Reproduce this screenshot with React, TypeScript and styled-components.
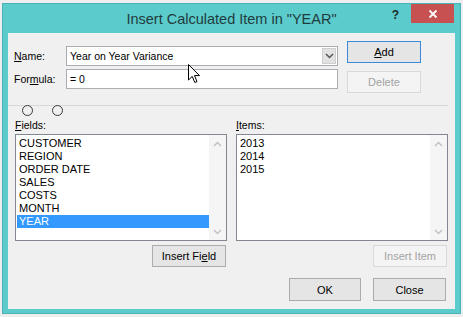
import { createGlobalStyle } from 'styled-components';
import styled from 'styled-components';

const GlobalStyle = createGlobalStyle`
  html, body {
    margin: 0;
    padding: 0;
    background: #eeeeee;
  }
  * {
    box-sizing: border-box;
  }
`;

const Window = styled.div`
  width: 459px;
  height: 311px;
  margin: 3px 2px;
  background: #5ccbcc;
  border: 1px solid #4bb3b5;
  padding: 0 5px 4px 5px;
  display: flex;
  flex-direction: column;
  font-family: 'Liberation Sans', Arial, sans-serif;
  font-size: 10.5px;
  color: #000;
`;

const TitleBar = styled.div`
  height: 29px;
  display: grid;
  grid-template-columns: 1fr auto 1fr;
  align-items: center;
`;

const Title = styled.span`
  grid-column: 2;
  font-size: 14.5px;
  color: #1f3c3d;
  white-space: nowrap;
`;

const Controls = styled.div`
  grid-column: 3;
  align-self: start;
  display: flex;
  justify-content: flex-end;
  align-items: flex-start;
  gap: 12px;
  margin-right: 1px;
`;

const Help = styled.span`
  font-size: 12px;
  font-weight: bold;
  color: #1a2a2a;
  margin-top: 4px;
`;

const CloseBox = styled.div`
  width: 43px;
  height: 19px;
  background: #c75050;
  display: flex;
  align-items: center;
  justify-content: center;
`;

const Client = styled.div`
  flex: 1;
  background: #f0f0f0;
  position: relative;
  display: flex;
  flex-direction: column;
`;

const Top = styled.div`
  display: flex;
  align-items: flex-start;
  padding-left: 6px;
`;

const FormGrid = styled.div`
  display: grid;
  grid-template-columns: 52px 272px;
  grid-auto-rows: 20px;
  row-gap: 3px;
  padding-top: 13px;
  align-items: center;
`;

const Mn = styled.span`
  text-decoration: underline;
  text-underline-offset: 1px;
`;

const Field = styled.div`
  height: 20px;
  border: 1px solid #abadb3;
  background: #fff;
  display: flex;
  align-items: center;
  padding-left: 3px;
`;

const FieldText = styled.span`
  flex: 1;
`;

const DropButton = styled.div`
  width: 14px;
  align-self: stretch;
  margin: 1px;
  background: #e2e2e2;
  border: 1px solid #cfcfcf;
  display: flex;
  align-items: center;
  justify-content: center;
`;

const ButtonCol = styled.div`
  display: flex;
  flex-direction: column;
  gap: 8px;
  margin-left: 9px;
  padding-top: 8px;
`;

const Button = styled.div<{ $w?: number; $h?: number; $disabled?: boolean; $focus?: boolean }>`
  width: ${(p) => p.$w ?? 74}px;
  height: ${(p) => p.$h ?? 22}px;
  display: flex;
  align-items: center;
  justify-content: center;
  background: ${(p) => (p.$disabled ? '#f4f4f4' : '#e5e5e5')};
  border: 1px solid ${(p) => (p.$focus ? '#3d88d4' : p.$disabled ? '#d9d9d9' : '#acacac')};
  color: ${(p) => (p.$disabled ? '#a3a3a3' : '#000')};
  font-size: 11px;
`;

const Separator = styled.div`
  position: relative;
  height: 1px;
  margin: 12px 7px 0 0;
  background: #d9d9d9;
`;

const Handle = styled.div<{ $left: number }>`
  position: absolute;
  top: 0;
  left: ${(p) => p.$left}px;
  width: 11px;
  height: 11px;
  border-radius: 50%;
  border: 1px solid #3a3a3a;
  background: #f0f0f0;
`;

const Lists = styled.div`
  display: grid;
  grid-template-columns: 212px 212px;
  column-gap: 9px;
  padding-left: 7px;
  margin-top: 13px;
`;

const Column = styled.div`
  display: flex;
  flex-direction: column;
`;

const ListLabel = styled.div`
  height: 13px;
  line-height: 13px;
  margin-bottom: 2px;
`;

const ListBox = styled.div`
  height: 107px;
  border: 1px solid #828790;
  background: #fff;
  display: flex;
`;

const ListItems = styled.div`
  flex: 1;
  padding: 1.5px 0 0 1px;
`;

const Row = styled.div<{ $selected?: boolean }>`
  height: 13px;
  line-height: 13px;
  padding-left: 2px;
  font-size: 11px;
  background: ${(p) => (p.$selected ? '#3399ff' : 'transparent')};
  color: ${(p) => (p.$selected ? '#fff' : '#000')};
`;

const ScrollBar = styled.div`
  width: 17px;
  background: #f5f5f5;
  display: flex;
  flex-direction: column;
  justify-content: space-between;
  align-items: center;
  padding: 6px 0 5px;
`;

const ButtonRow = styled.div`
  display: flex;
  justify-content: flex-end;
  margin-top: 4px;
  padding-right: 1px;
`;

const Footer = styled.div`
  display: flex;
  justify-content: flex-end;
  gap: 12px;
  margin-top: 11px;
  padding-right: 9px;
`;

const Cursor = styled.svg`
  position: absolute;
  left: 180px;
  top: 31px;
`;

const Chevron = ({ up, color = '#c3c3c3' }: { up?: boolean; color?: string }) => (
  <svg width="9" height="6" viewBox="0 0 9 6">
    <polyline
      points={up ? '1,5 4.5,1.5 8,5' : '1,1 4.5,4.5 8,1'}
      fill="none"
      stroke={color}
      strokeWidth="1.5"
    />
  </svg>
);

const fields = ['CUSTOMER', 'REGION', 'ORDER DATE', 'SALES', 'COSTS', 'MONTH', 'YEAR'];
const items = ['2013', '2014', '2015'];

export default function App() {
  return (
    <>
      <GlobalStyle />
      <Window>
        <TitleBar>
          <Title>Insert Calculated Item in "YEAR"</Title>
          <Controls>
            <Help>?</Help>
            <CloseBox>
              <svg width="10" height="10" viewBox="0 0 10 10">
                <path d="M1.5 1.5 L8.5 8.5 M8.5 1.5 L1.5 8.5" stroke="#fff" strokeWidth="1.8" />
              </svg>
            </CloseBox>
          </Controls>
        </TitleBar>

        <Client>
          <Top>
            <FormGrid>
              <span>
                <Mn>N</Mn>ame:
              </span>
              <Field>
                <FieldText>Year on Year Variance</FieldText>
                <DropButton>
                  <Chevron color="#555" />
                </DropButton>
              </Field>
              <span>
                For<Mn>m</Mn>ula:
              </span>
              <Field>
                <FieldText>= 0</FieldText>
              </Field>
            </FormGrid>
            <ButtonCol>
              <Button $focus>
                <span>
                  <Mn>A</Mn>dd
                </span>
              </Button>
              <Button $disabled>Delete</Button>
            </ButtonCol>
          </Top>

          <Separator>
            <Handle $left={14} />
            <Handle $left={44} />
          </Separator>

          <Lists>
            <Column>
              <ListLabel>
                <Mn>F</Mn>ields:
              </ListLabel>
              <ListBox>
                <ListItems>
                  {fields.map((f) => (
                    <Row key={f} $selected={f === 'YEAR'}>
                      {f}
                    </Row>
                  ))}
                </ListItems>
                <ScrollBar>
                  <Chevron up />
                  <Chevron />
                </ScrollBar>
              </ListBox>
              <ButtonRow>
                <Button>
                  <span>
                    Insert Fi<Mn>e</Mn>ld
                  </span>
                </Button>
              </ButtonRow>
            </Column>
            <Column>
              <ListLabel>
                <Mn>I</Mn>tems:
              </ListLabel>
              <ListBox>
                <ListItems>
                  {items.map((i) => (
                    <Row key={i}>{i}</Row>
                  ))}
                </ListItems>
                <ScrollBar>
                  <Chevron up />
                  <Chevron />
                </ScrollBar>
              </ListBox>
              <ButtonRow>
                <Button $disabled>Insert Item</Button>
              </ButtonRow>
            </Column>
          </Lists>

          <Footer>
            <Button $w={72} $h={23}>
              OK
            </Button>
            <Button $w={73} $h={23}>
              Close
            </Button>
          </Footer>

          <Cursor width="13" height="20" viewBox="0 0 13 20">
            <path
              d="M0.5 0.5 L0.5 16 L4.2 12.4 L6.8 18.5 L9 17.6 L6.5 11.6 L11.5 11.6 Z"
              fill="#fff"
              stroke="#000"
              strokeWidth="1"
              strokeLinejoin="round"
            />
          </Cursor>
        </Client>
      </Window>
    </>
  );
}
